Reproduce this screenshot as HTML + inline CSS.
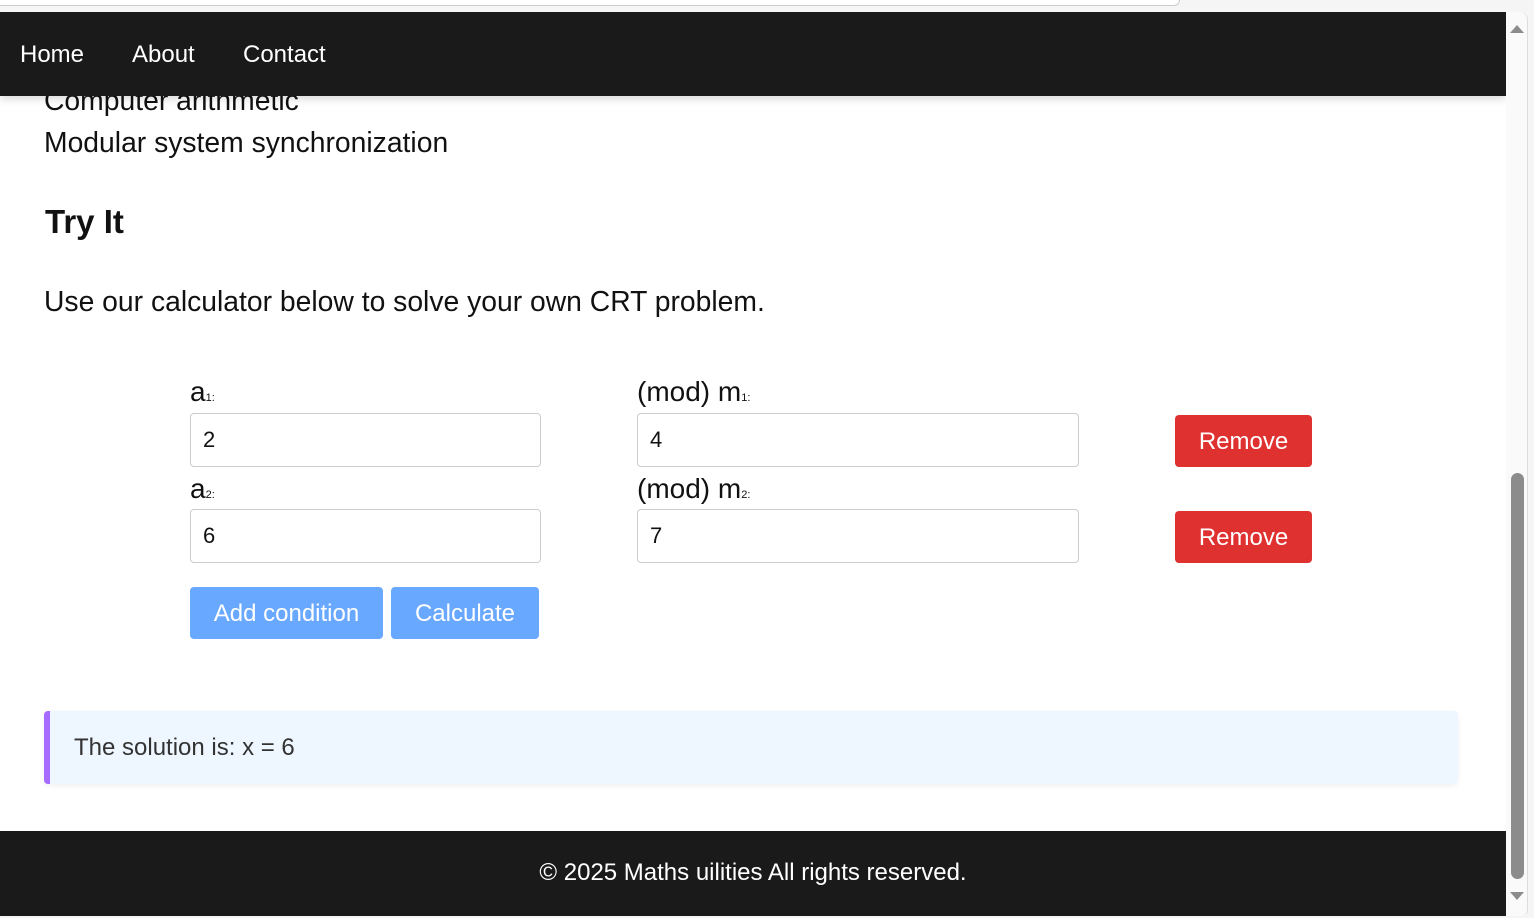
<!DOCTYPE html>
<html><head><meta charset="utf-8"><style>
*{margin:0;padding:0;box-sizing:border-box}
html,body{width:1534px;height:918px;overflow:hidden;background:#f5f5f5;font-family:"Liberation Sans",Arial,sans-serif}
.a{position:absolute}
#page{left:0;top:12px;width:1506px;height:904px;background:#fff;overflow:hidden}
.t{position:absolute;white-space:nowrap;color:#111}
input{position:absolute;border:1px solid #ccc;border-radius:4px;height:54px;font:22px "Liberation Sans",sans-serif;padding-left:12px;color:#111;background:#fff}
.btn{position:absolute;color:#fff;font-size:24px;display:flex;align-items:center;justify-content:center;border-radius:4px;padding-top:2px}
.rm{background:#e03131;width:137px;height:52px;left:1175px}
.bl{background:#69a8ff;height:52px;top:575px}
sub{font-size:11px;vertical-align:baseline;position:relative;top:0}
</style></head><body>
<div class="a" style="left:0;top:0;width:1180px;height:6px;border-bottom:1px solid #ccc;border-right:1px solid #ccc;border-bottom-right-radius:10px;background:#fff"></div>
<div class="a" id="page">
  <div class="t" style="left:44px;top:72px;font-size:28.3px">Computer arithmetic</div>
  <div class="t" style="left:44px;top:114px;font-size:28.3px">Modular system synchronization</div>
  <div class="a" style="left:0;top:0;width:1506px;height:84px;background:#1a1a1a;box-shadow:0 3px 8px rgba(0,0,0,.15)">
    <div class="t" style="left:20px;top:29px;font-size:24px;color:#fff">Home</div>
    <div class="t" style="left:132px;top:29px;font-size:24px;color:#fff">About</div>
    <div class="t" style="left:243px;top:29px;font-size:24px;color:#fff">Contact</div>
  </div>
  <div class="t" style="left:45px;top:191px;font-size:33px;font-weight:bold">Try It</div>
  <div class="t" style="left:44px;top:273px;font-size:28.3px">Use our calculator below to solve your own CRT problem.</div>
  <div class="t" style="left:190px;top:364px;font-size:28px">a<sub>1:</sub></div>
  <div class="t" style="left:637px;top:364px;font-size:28px">(mod) m<sub>1:</sub></div>
  <input style="left:190px;top:401px;width:351px" value="2">
  <input style="left:637px;top:401px;width:442px" value="4">
  <div class="btn rm" style="top:403px">Remove</div>
  <div class="t" style="left:190px;top:461px;font-size:28px">a<sub>2:</sub></div>
  <div class="t" style="left:637px;top:461px;font-size:28px">(mod) m<sub>2:</sub></div>
  <input style="left:190px;top:497px;width:351px" value="6">
  <input style="left:637px;top:497px;width:442px" value="7">
  <div class="btn rm" style="top:499px">Remove</div>
  <div class="btn bl" style="left:190px;width:193px">Add condition</div>
  <div class="btn bl" style="left:391px;width:148px">Calculate</div>
  <div class="a" style="left:44px;top:699px;width:1414px;height:73px;background:#eef6ff;border-left:6px solid #a66bff;border-radius:4px;box-shadow:0 2px 6px rgba(0,0,0,.06)">
    <div class="t" style="left:24px;top:23px;font-size:24px;color:#333">The solution is: x = 6</div>
  </div>
  <div class="a" style="left:0;top:819px;width:1506px;height:85px;background:#1a1a1a">
    <div class="t" style="left:0;width:1506px;text-align:center;top:28px;font-size:24px;color:#fff">© 2025 Maths uilities All rights reserved.</div>
  </div>
</div>
<div class="a" style="left:1506px;top:12px;width:22px;height:904px;background:#fafafa;border-right:1px solid #ddd;border-top-right-radius:8px;border-bottom-right-radius:6px"></div>
<div class="a" style="left:1510px;top:25px;width:0;height:0;border-left:7px solid transparent;border-right:7px solid transparent;border-bottom:8px solid #8c8c8c"></div>
<div class="a" style="left:1511px;top:473px;width:13px;height:406px;background:#8c8c8c;border-radius:7px"></div>
<div class="a" style="left:1510px;top:892px;width:0;height:0;border-left:7px solid transparent;border-right:7px solid transparent;border-top:8px solid #8c8c8c"></div>
</body></html>
